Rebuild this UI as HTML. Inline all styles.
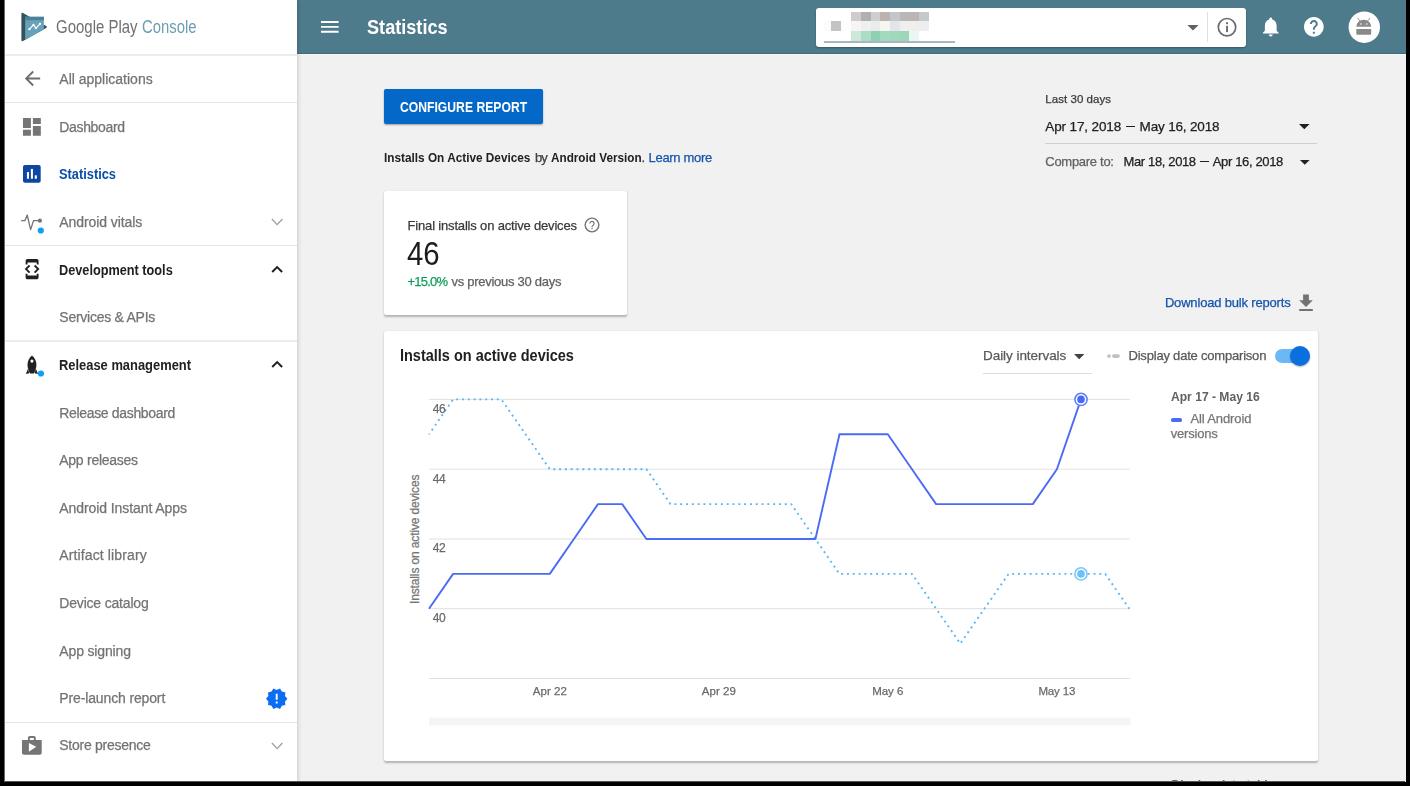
<!DOCTYPE html>
<html lang="en">
<head>
<meta charset="utf-8">
<title>Statistics - Google Play Console</title>
<style>
*{box-sizing:border-box;margin:0;padding:0}
html,body{width:1410px;height:786px;overflow:hidden;background:#000}
body{font-family:"Liberation Sans",sans-serif;position:relative}
#page{position:absolute;left:0;top:0;width:1410px;height:786px;background:#f1f1f1;overflow:hidden}
.abs{position:absolute}
.t{position:absolute;white-space:pre;display:block}
#txt{position:absolute;left:0;top:0;width:1410px;height:786px;will-change:transform}
#sidebar{position:absolute;left:0;top:0;width:296.5px;height:786px;background:#fff;box-shadow:1px 0 4px rgba(0,0,0,.17)}
.hr{position:absolute;left:0;width:296.5px;height:1px;background:#e4e4e4}
#topbar{position:absolute;left:296.5px;top:0;width:1114px;height:54px;background:#4e7b8c;box-shadow:inset 0 -1px 0 rgba(20,60,80,.25),0 1px 0 #f8f6f6}
#search{position:absolute;left:816px;top:8px;width:430px;height:38.5px;background:#fff;border-radius:3px;box-shadow:0 1px 2px rgba(0,0,0,.3)}
.card{position:absolute;background:#fff;border-radius:2px;box-shadow:0 1.500px 2px rgba(0,0,0,.25),0 0 1px rgba(0,0,0,.1)}
#btn{position:absolute;left:384px;top:89px;width:158.5px;height:35px;background:#0468c8;border-radius:2px;box-shadow:0 1px 2px rgba(0,0,0,.35)}
.edge{position:absolute;z-index:50}
</style>
</head>
<body>
<div id="page">

<!-- ============ TOP BAR ============ -->
<div id="topbar"></div>
<!-- hamburger -->
<svg class="abs" style="left:321px;top:21px" width="18" height="12" viewBox="0 0 18 12"><path d="M0 0h17.6v1.9H0zM0 4.9h17.6v1.9H0zM0 9.8h17.6v1.9H0z" fill="#fff"/></svg>

<div id="search"></div>
<!-- pixelated (redacted) app name -->
<svg class="abs" style="left:816px;top:8px" width="200" height="39" viewBox="816 8 200 39" shape-rendering="crispEdges">
<g>
<rect x="851.1" y="11.8" width="9.8" height="9.6" fill="#d0cccd"/><rect x="860.8" y="11.8" width="9.8" height="9.6" fill="#b0b0b2"/><rect x="870.5" y="11.8" width="9.8" height="9.6" fill="#cfcecd"/><rect x="880.2" y="11.8" width="9.8" height="9.6" fill="#bcb2b0"/><rect x="889.9" y="11.8" width="9.8" height="9.6" fill="#c0c6ca"/><rect x="899.6" y="11.8" width="9.8" height="9.6" fill="#b9b7b7"/><rect x="909.3" y="11.8" width="9.8" height="9.6" fill="#bbb6b3"/><rect x="919" y="11.8" width="9.8" height="9.6" fill="#c5c9cc"/>
<rect x="823.8" y="21.4" width="7.6" height="9.6" fill="#fcfcfc"/><rect x="831.3" y="21.4" width="9.8" height="9.6" fill="#c4c4c4"/><rect x="841" y="21.4" width="10.2" height="9.6" fill="#fdfdfd"/>
<rect x="851.1" y="21.4" width="9.8" height="9.6" fill="#f5f5f5"/><rect x="860.8" y="21.4" width="9.8" height="9.6" fill="#efefef"/><rect x="870.5" y="21.4" width="9.8" height="9.6" fill="#eaebeb"/><rect x="880.2" y="21.4" width="9.8" height="9.6" fill="#f5f5f2"/><rect x="889.9" y="21.4" width="9.8" height="9.6" fill="#e2e6e8"/><rect x="899.6" y="21.4" width="9.8" height="9.6" fill="#efefef"/><rect x="909.3" y="21.4" width="9.8" height="9.6" fill="#f0efee"/><rect x="919" y="21.4" width="9.8" height="9.6" fill="#eeeeee"/>
<rect x="851.1" y="31" width="9.8" height="9.7" fill="#cbe8d8"/><rect x="860.8" y="31" width="9.8" height="9.7" fill="#acdcc6"/><rect x="870.5" y="31" width="9.8" height="9.7" fill="#8dd0b3"/><rect x="880.2" y="31" width="9.8" height="9.7" fill="#a3dabf"/><rect x="889.9" y="31" width="9.8" height="9.7" fill="#a0d8ba"/><rect x="899.6" y="31" width="9.8" height="9.7" fill="#9dd7b8"/><rect x="909.3" y="31" width="9.8" height="9.7" fill="#e9f6f2"/>
</g>
</svg>
<div class="abs" style="left:823.8px;top:41px;width:131.4px;height:1.5px;background:#a5b8c2"></div>
<!-- search dropdown arrow -->
<svg class="abs" style="left:1186.5px;top:25px" width="12" height="6" viewBox="0 0 12 6"><path d="M0.4 0h11.2L6 5.6z" fill="#616161"/></svg>
<div class="abs" style="left:1207px;top:12px;width:1px;height:30px;background:#e0e0e0"></div>
<!-- info icon -->
<svg class="abs" style="left:1217px;top:17.300px" width="20" height="20" viewBox="0 0 20 20"><circle cx="10" cy="10.2" r="8.7" fill="none" stroke="#6b6b6b" stroke-width="1.7"/><rect x="9.1" y="8.8" width="1.9" height="6.3" fill="#6b6b6b"/><rect x="9.1" y="5.2" width="1.9" height="2" fill="#6b6b6b"/></svg>
<!-- bell -->
<svg class="abs" style="left:1259.3px;top:15.3px" width="23.5" height="23.5" viewBox="0 0 24 24"><path d="M12 22c1.1 0 2-.9 2-2h-4c0 1.1.89 2 2 2zm6-6v-5c0-3.07-1.64-5.64-4.5-6.32V4c0-.83-.67-1.5-1.5-1.5s-1.5.67-1.5 1.5v.68C7.63 5.36 6 7.92 6 11v5l-2 2v1h16v-1l-2-2z" fill="#fff"/></svg>
<!-- help -->
<svg class="abs" style="left:1302px;top:15.2px" width="23.7" height="23.7" viewBox="0 0 24 24"><path d="M12 2C6.48 2 2 6.48 2 12s4.48 10 10 10 10-4.48 10-10S17.52 2 12 2zm1 17h-2v-2h2v2zm2.07-7.75l-.9.92C13.45 12.9 13 13.5 13 15h-2v-.5c0-1.1.45-2.1 1.17-2.83l1.24-1.26c.37-.36.59-.86.59-1.41 0-1.1-.9-2-2-2s-2 .9-2 2H8c0-2.21 1.79-4 4-4s4 1.79 4 4c0 .88-.36 1.68-.93 2.25z" fill="#fff"/></svg>
<!-- avatar -->
<svg class="abs" style="left:1346px;top:9px" width="36" height="36" viewBox="1346 9 36 36"><circle cx="1364.300" cy="27.200" r="15.700" fill="#fff"/>
<path d="M1356.300 26.700A7.450 7.100 0 0 1 1371.200 26.700Z" fill="#8a8a8a"/>
<path d="M1356.300 28.900h14.900v4.900q0 .9-.9.900h-13.100q-.9 0-.9-.9z" fill="#8a8a8a"/>
<path d="M1357.800 18.300l2.600 3.400M1369.700 18.300l-2.600 3.400" stroke="#8a8a8a" stroke-width=".9" stroke-linecap="round" fill="none"/>
<circle cx="1360.900" cy="24" r=".8" fill="#fff"/><circle cx="1366.700" cy="24" r=".8" fill="#fff"/></svg>

<!-- ============ SIDEBAR ============ -->
<div id="sidebar"></div>
<div class="hr" style="top:54px;height:2px;background:#ececec"></div>
<div class="hr" style="top:101.8px"></div>
<div class="hr" style="top:244.8px"></div>
<div class="hr" style="top:340px;height:2px;background:#ececec"></div>
<div class="hr" style="top:721.8px"></div>

<!-- logo -->
<svg class="abs" style="left:21px;top:12px" width="27" height="30" viewBox="21 12 27 30">
<path d="M21.4 13.9q0-1.8 1.600-.9L46.200 26q1.500 1-.0 2L23 41q-1.600.9-1.600-.9z" fill="#36515e"/>
<path d="M25.200 16.800h18.700v12.500L25.200 39.700z" fill="#67a2b9"/>
<path d="M25.200 16.800h18.700v3.400H25.200z" fill="#4a8399"/>
<path d="M29.400 29.200L33.500 24.900 35.900 28.100 40 23.800" fill="none" stroke="#fff" stroke-width="1.200" stroke-linecap="round" stroke-linejoin="round"/>
<circle cx="29.400" cy="29.200" r="1.150" fill="#fff"/><circle cx="33.500" cy="24.900" r="1.150" fill="#fff"/><circle cx="35.900" cy="28.100" r="1.150" fill="#fff"/><circle cx="40" cy="23.800" r="1.150" fill="#fff"/>
</svg>

<!-- back arrow -->
<svg class="abs" style="left:20.600px;top:67.300px" width="23" height="23" viewBox="0 0 24 24"><path d="M20 11H7.830l5.590-5.590L12 4l-8 8 8 8 1.410-1.410L7.830 13H20v-2z" fill="#6e6e6e"/></svg>
<!-- dashboard -->
<svg class="abs" style="left:20.200px;top:114.600px" width="23.800" height="23.800" viewBox="0 0 24 24"><path d="M3 13h8V3H3v10zm0 8h8v-6H3v6zm10 0h8V11h-8v10zm0-18v6h8V3h-8z" fill="#757575"/></svg>
<!-- statistics -->
<svg class="abs" style="left:23.300px;top:165.400px" width="17.700" height="17.700" viewBox="0 0 18 18"><rect width="18" height="18" rx="2" fill="#0d47a1"/><rect x="4" y="7.200" width="2.100" height="6.800" fill="#fff"/><rect x="8" y="4" width="2.100" height="10" fill="#fff"/><rect x="12" y="10.500" width="2.100" height="3.500" fill="#fff"/></svg>
<!-- android vitals -->
<svg class="abs" style="left:20px;top:210px" width="26" height="26" viewBox="20 210 26 26"><path d="M21.600 220.700h3.300l2.300-5.700 3.400 14.600 2.900-8.900h5" fill="none" stroke="#757575" stroke-width="1.300" stroke-linejoin="round" stroke-linecap="round"/><circle cx="39.900" cy="220.700" r="2.100" fill="#757575"/><circle cx="40.800" cy="230.500" r="3.100" fill="#0d9ff5"/></svg>
<!-- developer mode -->
<svg class="abs" style="left:20.900px;top:258.100px" width="22.200" height="22.200" viewBox="0 0 24 24"><path d="M7 5h10v2h2V3c0-1.100-.9-1.990-2-1.990L7 1c-1.100 0-2 .9-2 2v4h2V5zm8.410 11.590L20 12l-4.590-4.590L14 8.830 17.170 12 14 15.170l1.410 1.420zM10 15.170L6.830 12 10 8.830 8.590 7.410 4 12l4.590 4.590L10 15.170zM17 19H7v-2H5v4c0 1.100.9 2 2 2h10c1.100 0 2-.9 2-2v-4h-2v2z" fill="#212121"/></svg>
<!-- rocket -->
<svg class="abs" style="left:22px;top:352px" width="24" height="26" viewBox="22 352 24 26"><path d="M31.950 355.400C35 358 36.500 361.500 36.400 365C36.300 368.500 35 371.500 33.900 373.500L30 373.500C28.900 371.500 27.600 368.500 27.500 365C27.400 361.500 28.900 358 31.950 355.400Z" fill="#212121"/><circle cx="31.950" cy="361.100" r="1.550" fill="#fff"/><path d="M25.800 374.100L28 368.700 29.300 373.200zM38.100 374.100L35.900 368.700 34.600 373.200z" fill="#212121"/><circle cx="40.900" cy="373.500" r="3.100" fill="#0d9ff5"/></svg>
<!-- shop -->
<svg class="abs" style="left:20.100px;top:734.300px" width="23.700" height="23.700" viewBox="0 0 24 24"><path d="M16 6V4c0-1.110-.89-2-2-2h-4c-1.110 0-2 .89-2 2v2H2v13c0 1.110.89 2 2 2h16c1.110 0 2-.89 2-2V6h-6zm-6-2h4v2h-4V4zM9 18V9l7.500 4L9 18z" fill="#757575"/></svg>
<!-- chevrons -->
<svg class="abs" style="left:270px;top:216px" width="14" height="12" viewBox="270 216 14 12"><path d="M271.900 219l5.250 5.600 5.250-5.600" fill="none" stroke="#9e9e9e" stroke-width="1.300"/></svg>
<svg class="abs" style="left:270px;top:740px" width="14" height="12" viewBox="270 740 14 12"><path d="M271.900 743l5.250 5.600 5.250-5.600" fill="none" stroke="#9e9e9e" stroke-width="1.300"/></svg>
<svg class="abs" style="left:270px;top:263px" width="14" height="12" viewBox="270 263 14 12"><path d="M272.200 272l4.950-4.900 4.950 4.900" fill="none" stroke="#212121" stroke-width="2"/></svg>
<svg class="abs" style="left:270px;top:358.400px" width="14" height="12" viewBox="270 263 14 12"><path d="M272.200 272l4.950-4.900 4.950 4.900" fill="none" stroke="#212121" stroke-width="2"/></svg>
<!-- new releases badge -->
<svg class="abs" style="left:265.300px;top:686.600px" width="23.400" height="23.400" viewBox="0 0 24 24"><path d="M23 12l-2.440-2.780.34-3.680-3.610-.82-1.890-3.180L12 3 8.600 1.540 6.710 4.720l-3.610.81.340 3.680L1 12l2.440 2.780-.34 3.690 3.610.82 1.890 3.180L12 21l3.400 1.460 1.890-3.180 3.610-.82-.34-3.680L23 12zm-10 5h-2v-2h2v2zm0-4h-2V7h2v6z" fill="#0a6df2"/></svg>

<!-- ============ MAIN ============ -->
<div id="btn"></div>
<div class="card" style="left:384px;top:191px;width:243px;height:123.500px"></div>
<!-- small help icon -->
<svg class="abs" style="left:584.200px;top:217.300px" width="16" height="16" viewBox="0 0 16 16"><circle cx="8" cy="8" r="6.850" fill="none" stroke="#757575" stroke-width="1.400"/><path d="M5.900 6.500a2.100 2.100 0 1 1 3.300 1.700c-.8.500-1.200.9-1.200 1.800" fill="none" stroke="#757575" stroke-width="1.200"/><rect x="7.400" y="10.800" width="1.300" height="1.300" fill="#757575"/></svg>

<!-- date range -->
<svg class="abs" style="left:1299px;top:124px" width="11" height="6" viewBox="0 0 11 6"><path d="M0 0h10.600L5.300 5.300z" fill="#212121"/></svg>
<div class="abs" style="left:1045.300px;top:143px;width:272px;height:1px;background:#cfcfcf"></div>
<svg class="abs" style="left:1300px;top:159.500px" width="10" height="6" viewBox="0 0 10 6"><path d="M0 0h9.600L4.800 4.800z" fill="#212121"/></svg>
<div class="abs" style="left:1126px;top:125.800px;width:9px;height:1.100px;background:#212121"></div>
<div class="abs" style="left:1200.300px;top:161.300px;width:8.700px;height:1.100px;background:#212121"></div>
<!-- download icon -->
<svg class="abs" style="left:1294px;top:291px" width="24" height="24" viewBox="0 0 24 24"><path d="M18.800 9.200h-3.900V3.400H9.100v5.800H5.200l6.800 6.800 6.800-6.800zM5.200 18v1.900h13.600V18H5.200z" fill="#737373"/></svg>

<!-- chart card -->
<div class="card" style="left:384px;top:331px;width:933.500px;height:430px"></div>
<svg class="abs" style="left:1073.500px;top:353.500px" width="11" height="6" viewBox="0 0 11 6"><path d="M0 0h10.400L5.200 5.200z" fill="#424242"/></svg>
<div class="abs" style="left:983px;top:372.700px;width:109px;height:1px;background:#dcdcdc"></div>
<!-- compare icon -->
<svg class="abs" style="left:1106px;top:352px" width="16" height="8" viewBox="0 0 16 8"><circle cx="3" cy="4.100" r="1.850" fill="#c2c2c2"/><rect x="6" y="2.300" width="7.900" height="3.600" rx="1.800" fill="#c2c2c2"/></svg>
<!-- toggle -->
<div class="abs" style="left:1274.500px;top:349px;width:35px;height:14px;border-radius:7px;background:#6bb8f7"></div>
<div class="abs" style="left:1290px;top:346px;width:20px;height:20px;border-radius:10px;background:#0b6fe0;box-shadow:0 1px 2px rgba(0,0,0,.3)"></div>
<!-- legend dash -->
<div class="abs" style="left:1170.700px;top:418.200px;width:11.800px;height:3.700px;border-radius:1.850px;background:#4a6bf5"></div>

<svg class="abs" style="left:0;top:0" width="1405" height="781" viewBox="0 0 1405 781">
<line x1="429.0" x2="1129.8" y1="399.4" y2="399.4" stroke="#e0e0e0" stroke-width="1"/><line x1="429.0" x2="1129.8" y1="469.2" y2="469.2" stroke="#e0e0e0" stroke-width="1"/><line x1="429.0" x2="1129.8" y1="539.0" y2="539.0" stroke="#e0e0e0" stroke-width="1"/><line x1="429.0" x2="1129.8" y1="608.7" y2="608.7" stroke="#e0e0e0" stroke-width="1"/><line x1="429.0" x2="1129.8" y1="678.5" y2="678.5" stroke="#e0e0e0" stroke-width="1"/>
<rect x="429.0" y="717.8" width="701.4" height="7.6" fill="#f5f5f5"/>
<polyline points="429.0,434.3 453.1,399.4 477.3,399.4 501.4,399.4 525.6,434.3 549.8,469.2 573.9,469.2 598.0,469.2 622.2,469.2 646.4,469.2 670.5,504.1 694.6,504.1 718.8,504.1 743.0,504.1 767.1,504.1 791.2,504.1 815.4,539.0 839.5,573.9 863.7,573.9 887.8,573.9 912.0,573.9 936.1,608.7 960.3,643.6 984.4,608.7 1008.6,573.9 1032.8,573.9 1056.9,573.9 1081.0,573.9 1105.2,573.9 1129.3,608.7" fill="none" stroke="#5db7f5" stroke-width="1.9" stroke-dasharray="2 3.81" stroke-dashoffset="1" stroke-linecap="butt"/>
<polyline points="429.0,608.7 453.1,573.9 477.3,573.9 501.4,573.9 525.6,573.9 549.8,573.9 573.9,539.0 598.0,504.1 622.2,504.1 646.4,539.0 670.5,539.0 694.6,539.0 718.8,539.0 743.0,539.0 767.1,539.0 791.2,539.0 815.4,539.0 839.5,434.3 863.7,434.3 887.8,434.3 912.0,469.2 936.1,504.1 960.3,504.1 984.4,504.1 1008.6,504.1 1032.8,504.1 1056.9,469.2 1081.0,399.4" fill="none" stroke="#4a6bf5" stroke-width="1.9" stroke-linejoin="round"/>
<circle cx="1081.0" cy="399.4" r="6.1" fill="#fff" stroke="#5f7ef8" stroke-width="1.6"/>
<circle cx="1081.0" cy="399.4" r="3.8" fill="#4767f6"/>
<circle cx="1081.0" cy="573.9" r="6.1" fill="#fff" stroke="#7cc6f8" stroke-width="1.6"/>
<circle cx="1081.0" cy="573.9" r="3.8" fill="#6cc0f7"/>
<text transform="translate(419.3,539.3) rotate(-90)" text-anchor="middle" font-size="12" fill="#757575" stroke="#757575" stroke-width=".25" textLength="129.5" lengthAdjust="spacing">Installs on active devices</text>
</svg>

<div id="txt">
<span class="t" style="left:59.3px;top:69.0px;line-height:20px;color:#737373;font-weight:400;font-size:14px;letter-spacing:0.001px;-webkit-text-stroke:.25px;">All applications</span>
<span class="t" style="left:59.3px;top:116.6px;line-height:20px;color:#737373;font-weight:400;font-size:14px;letter-spacing:-0.350px;-webkit-text-stroke:.25px;">Dashboard</span>
<span class="t" style="left:59.3px;top:164.3px;line-height:20px;color:#0c4fab;font-weight:700;font-size:14px;letter-spacing:0.000px;transform-origin:0 50%;transform:scaleX(0.9157);">Statistics</span>
<span class="t" style="left:59.3px;top:211.9px;line-height:20px;color:#737373;font-weight:400;font-size:14px;letter-spacing:-0.081px;-webkit-text-stroke:.25px;">Android vitals</span>
<span class="t" style="left:59.3px;top:259.6px;line-height:20px;color:#212121;font-weight:700;font-size:14px;letter-spacing:0.000px;transform-origin:0 50%;transform:scaleX(0.9078);">Development tools</span>
<span class="t" style="left:59.3px;top:307.2px;line-height:20px;color:#737373;font-weight:400;font-size:14px;letter-spacing:-0.257px;-webkit-text-stroke:.25px;">Services &amp; APIs</span>
<span class="t" style="left:59.3px;top:354.8px;line-height:20px;color:#212121;font-weight:700;font-size:14px;letter-spacing:0.000px;transform-origin:0 50%;transform:scaleX(0.9219);">Release management</span>
<span class="t" style="left:59.3px;top:402.5px;line-height:20px;color:#737373;font-weight:400;font-size:14px;letter-spacing:-0.339px;-webkit-text-stroke:.25px;">Release dashboard</span>
<span class="t" style="left:59.3px;top:450.1px;line-height:20px;color:#737373;font-weight:400;font-size:14px;letter-spacing:-0.274px;-webkit-text-stroke:.25px;">App releases</span>
<span class="t" style="left:59.3px;top:497.8px;line-height:20px;color:#737373;font-weight:400;font-size:14px;letter-spacing:-0.079px;-webkit-text-stroke:.25px;">Android Instant Apps</span>
<span class="t" style="left:59.3px;top:545.4px;line-height:20px;color:#737373;font-weight:400;font-size:14px;letter-spacing:0.121px;-webkit-text-stroke:.25px;">Artifact library</span>
<span class="t" style="left:59.3px;top:593.0px;line-height:20px;color:#737373;font-weight:400;font-size:14px;letter-spacing:-0.187px;-webkit-text-stroke:.25px;">Device catalog</span>
<span class="t" style="left:59.3px;top:640.7px;line-height:20px;color:#737373;font-weight:400;font-size:14px;letter-spacing:-0.147px;-webkit-text-stroke:.25px;">App signing</span>
<span class="t" style="left:59.3px;top:688.3px;line-height:20px;color:#737373;font-weight:400;font-size:14px;letter-spacing:-0.136px;-webkit-text-stroke:.25px;">Pre-launch report</span>
<span class="t" style="left:59.3px;top:735.4px;line-height:20px;color:#737373;font-weight:400;font-size:14px;letter-spacing:-0.273px;-webkit-text-stroke:.25px;">Store presence</span>
<span class="t" style="left:56.3px;top:14.6px;line-height:24px;color:#707070;font-weight:400;font-size:17.5px;letter-spacing:0.000px;transform-origin:0 50%;transform:scaleX(0.8559);">Google Play</span>
<span class="t" style="left:141.8px;top:14.6px;line-height:24px;color:#6c9db2;font-weight:400;font-size:17.5px;letter-spacing:0.000px;transform-origin:0 50%;transform:scaleX(0.8487);">Console</span>
<span class="t" style="left:366.7px;top:13.0px;line-height:28px;color:#ffffff;font-weight:700;font-size:20px;letter-spacing:0.000px;transform-origin:0 50%;transform:scaleX(0.9063);">Statistics</span>
<span class="t" style="left:399.9px;top:96.9px;line-height:20px;color:#ffffff;font-weight:700;font-size:14px;letter-spacing:0.000px;transform-origin:0 50%;transform:scaleX(0.8692);">CONFIGURE REPORT</span>
<span class="t" style="left:384.2px;top:149.2px;line-height:18px;color:#212121;font-weight:700;font-size:13px;letter-spacing:0.000px;transform-origin:0 50%;transform:scaleX(0.9072);">Installs On Active Devices</span>
<span class="t" style="left:535.0px;top:149.2px;line-height:18px;color:#424242;font-weight:400;font-size:13px;letter-spacing:-1.000px;-webkit-text-stroke:.25px;">by</span>
<span class="t" style="left:550.6px;top:149.2px;line-height:18px;color:#212121;font-weight:700;font-size:13px;letter-spacing:0.000px;transform-origin:0 50%;transform:scaleX(0.9023);">Android Version</span>
<span class="t" style="left:641.4px;top:149.2px;line-height:18px;color:#424242;font-weight:400;font-size:13px;letter-spacing:0.000px;-webkit-text-stroke:.25px;">.</span>
<span class="t" style="left:648.6px;top:149.2px;line-height:18px;color:#1653ac;font-weight:400;font-size:13px;letter-spacing:-0.320px;-webkit-text-stroke:.25px;">Learn more</span>
<span class="t" style="left:407.6px;top:217.0px;line-height:18px;color:#3a3a3a;font-weight:400;font-size:13px;letter-spacing:-0.176px;-webkit-text-stroke:.25px;">Final installs on active devices</span>
<span class="t" style="left:407.2px;top:234.3px;line-height:40px;color:#1c1c1c;font-weight:400;font-size:33px;letter-spacing:0.000px;transform-origin:0 50%;transform:scaleX(0.8906);">46</span>
<span class="t" style="left:407.6px;top:272.6px;line-height:18px;color:#0f9d58;font-weight:400;font-size:13px;letter-spacing:-0.811px;-webkit-text-stroke:.25px;">+15.0%</span>
<span class="t" style="left:451.5px;top:272.6px;line-height:18px;color:#616161;font-weight:400;font-size:13px;letter-spacing:-0.273px;-webkit-text-stroke:.25px;">vs previous 30 days</span>
<span class="t" style="left:1045.3px;top:91.0px;line-height:16px;color:#3a3a3a;font-weight:400;font-size:11.5px;letter-spacing:0.044px;-webkit-text-stroke:.25px;">Last 30 days</span>
<span class="t" style="left:1045.3px;top:117.2px;line-height:19px;color:#212121;font-weight:400;font-size:13.5px;letter-spacing:-0.128px;-webkit-text-stroke:.25px;">Apr 17, 2018</span>
<span class="t" style="left:1139.6px;top:117.2px;line-height:19px;color:#212121;font-weight:400;font-size:13.5px;letter-spacing:-0.174px;-webkit-text-stroke:.25px;">May 16, 2018</span>
<span class="t" style="left:1045.3px;top:153.0px;line-height:18px;color:#616161;font-weight:400;font-size:13px;letter-spacing:-0.285px;-webkit-text-stroke:.25px;">Compare to:</span>
<span class="t" style="left:1123.5px;top:153.0px;line-height:18px;color:#212121;font-weight:400;font-size:13px;letter-spacing:-0.364px;-webkit-text-stroke:.25px;">Mar 18, 2018</span>
<span class="t" style="left:1212.8px;top:153.0px;line-height:18px;color:#212121;font-weight:400;font-size:13px;letter-spacing:-0.359px;-webkit-text-stroke:.25px;">Apr 16, 2018</span>
<span class="t" style="left:1164.9px;top:293.9px;line-height:18px;color:#1653ac;font-weight:400;font-size:13px;letter-spacing:-0.178px;-webkit-text-stroke:.25px;">Download bulk reports</span>
<span class="t" style="left:400.0px;top:345.2px;line-height:22px;color:#212121;font-weight:700;font-size:16px;letter-spacing:0.000px;transform-origin:0 50%;transform:scaleX(0.9053);">Installs on active devices</span>
<span class="t" style="left:983.0px;top:345.9px;line-height:19px;color:#5a5a5a;font-weight:400;font-size:13.5px;letter-spacing:-0.052px;-webkit-text-stroke:.25px;">Daily intervals</span>
<span class="t" style="left:1128.5px;top:347.0px;line-height:18px;color:#585858;font-weight:400;font-size:13px;letter-spacing:-0.203px;-webkit-text-stroke:.25px;">Display date comparison</span>
<span class="t" style="left:1170.7px;top:387.5px;line-height:18px;color:#616161;font-weight:700;font-size:13px;letter-spacing:0.000px;transform-origin:0 50%;transform:scaleX(0.9300);">Apr 17 - May 16</span>
<span class="t" style="left:1190.4px;top:409.8px;line-height:18px;color:#757575;font-weight:400;font-size:13px;letter-spacing:-0.116px;-webkit-text-stroke:.25px;">All Android</span>
<span class="t" style="left:1170.7px;top:424.8px;line-height:18px;color:#757575;font-weight:400;font-size:13px;letter-spacing:-0.175px;-webkit-text-stroke:.25px;">versions</span>
<span class="t" style="left:432.7px;top:400.8px;line-height:17px;color:#6a6a6a;font-weight:400;font-size:12px;letter-spacing:-0.359px;-webkit-text-stroke:.25px;">46</span>
<span class="t" style="left:432.7px;top:470.5px;line-height:17px;color:#6a6a6a;font-weight:400;font-size:12px;letter-spacing:-0.359px;-webkit-text-stroke:.25px;">44</span>
<span class="t" style="left:432.7px;top:540.3px;line-height:17px;color:#6a6a6a;font-weight:400;font-size:12px;letter-spacing:-0.359px;-webkit-text-stroke:.25px;">42</span>
<span class="t" style="left:432.7px;top:610.0px;line-height:17px;color:#6a6a6a;font-weight:400;font-size:12px;letter-spacing:-0.359px;-webkit-text-stroke:.25px;">40</span>
<span class="t" style="left:532.8px;top:683.4px;line-height:16px;color:#6a6a6a;font-weight:400;font-size:11.5px;letter-spacing:0.022px;-webkit-text-stroke:.25px;">Apr 22</span>
<span class="t" style="left:701.8px;top:683.4px;line-height:16px;color:#6a6a6a;font-weight:400;font-size:11.5px;letter-spacing:0.022px;-webkit-text-stroke:.25px;">Apr 29</span>
<span class="t" style="left:872.3px;top:683.4px;line-height:16px;color:#6a6a6a;font-weight:400;font-size:11.5px;letter-spacing:-0.082px;-webkit-text-stroke:.25px;">May 6</span>
<span class="t" style="left:1038.4px;top:683.4px;line-height:16px;color:#6a6a6a;font-weight:400;font-size:11.5px;letter-spacing:-0.144px;-webkit-text-stroke:.25px;">May 13</span>

<!-- cropped text peeking at bottom -->
<span class="t" style="left:1171.500px;top:777.200px;line-height:16px;font-size:12px;font-weight:700;color:#616161;letter-spacing:.05px">Display data table</span>

</div>
<!-- ============ black frame ============ -->
<div class="edge" style="left:0;top:0;width:4px;height:786px;background:#000"></div>
<div class="edge" style="left:4px;top:0;width:1px;height:786px;background:#6a6a6a"></div>
<div class="edge" style="left:1406px;top:0;width:4px;height:786px;background:#000"></div>
<div class="edge" style="left:0;top:782px;width:1410px;height:4px;background:#000"></div>
<div class="edge" style="left:5px;top:781px;width:1400px;height:1px;background:#555"></div>
</div>
</body>
</html>
